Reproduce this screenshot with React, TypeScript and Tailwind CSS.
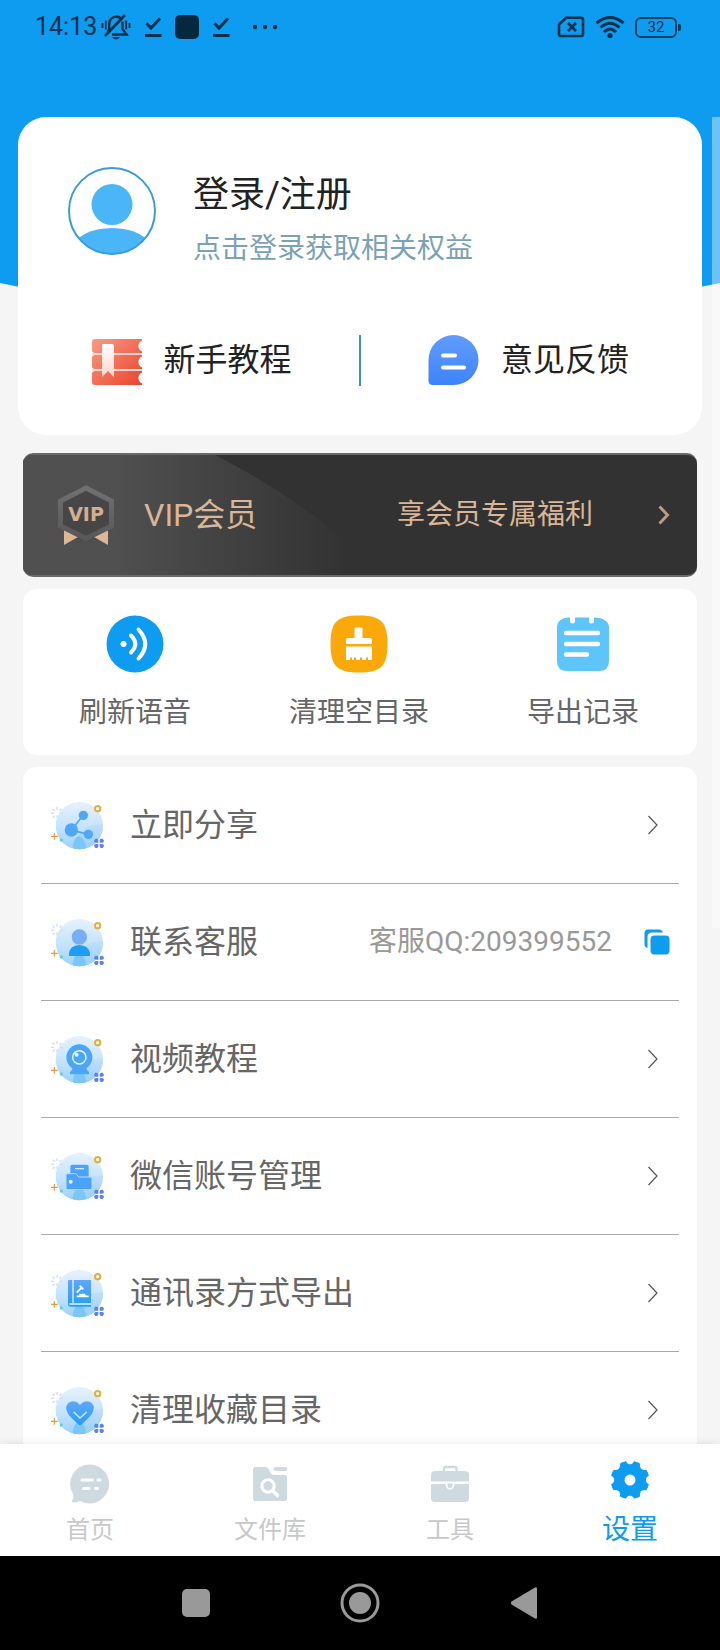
import { useState } from 'react';
import type { ReactNode } from 'react';

type Tab = 'home' | 'files' | 'tools' | 'settings';

interface MenuItem {
  id: string;
  label: string;
  glyph: ReactNode;
  extra?: string;
}

/* ---------- status bar ---------- */

function MutedBellIcon() {
  return (
    <svg viewBox="0 0 30 28" className="h-7 w-[30px]" fill="none" stroke="#07304a" strokeWidth="2.400">
      <path d="M21 7C18.500 2 8.500 2.500 8.200 11v5L6.500 19" />
      <path d="M21.500 8.500V16l4 5.500H11" />
      <path d="M4 23L24 2" strokeWidth="2.600" />
      <path d="M11 24h8q-4 5-8 0z" fill="#07304a" stroke="none" />
      <path d="M1.500 10v5M4.800 7.500v9M25.200 7.500v9M28.500 10v5" strokeWidth="1.800" />
    </svg>
  );
}

function DownloadDoneIcon() {
  return (
    <svg viewBox="0 0 18 22" className="h-[22px] w-[18px]" fill="none" stroke="#07304a">
      <path d="M2.500 7.500L7 12L16 2.500" strokeWidth="3" />
      <path d="M1 19.500h16.500" strokeWidth="3" />
    </svg>
  );
}

function StatusBar() {
  return (
    <div className="flex h-[54px] items-center justify-between pr-[39px] pl-[35px] text-[#07304a]">
      <div className="flex items-center">
        <span className="w-[66px] text-[25px] leading-8">14:13</span>
        <MutedBellIcon />
        <div className="ml-[13px] flex items-center gap-[13px]">
          <DownloadDoneIcon />
          <span className="size-6 rounded-[5px] bg-[#04283d]" />
          <DownloadDoneIcon />
        </div>
        <svg viewBox="0 0 26 6" className="ml-[22px] h-1.5 w-[26px]" fill="#07304a">
          <circle cx="3" cy="3" r="2.200" />
          <circle cx="13" cy="3" r="2.200" />
          <circle cx="23" cy="3" r="2.200" />
        </svg>
      </div>
      <div className="flex items-center gap-2.5">
        <svg viewBox="0 0 28 22" className="h-[22px] w-7" fill="none" stroke="#07304a" strokeWidth="2.600">
          <path d="M9 1.800H24q2 0 2 2V18q0 2-2 2H4q-2 0-2-2V8.500z" strokeLinejoin="round" />
          <path d="M11 7l8 8M19 7l-8 8" />
        </svg>
        <svg viewBox="0 0 30 24" className="h-6 w-[30px]" fill="none" stroke="#07304a" strokeWidth="3">
          <path d="M1.500 8Q15-3 28.500 8" />
          <path d="M5.500 12.500Q15 4 24.500 12.500" />
          <path d="M9 17Q15 11 21 17" />
          <circle cx="15" cy="20.500" r="2.600" fill="#07304a" stroke="none" />
        </svg>
        <div className="flex items-center">
          <span className="flex h-[21px] w-[42px] items-center justify-center rounded-md border-2 border-[#0a4061] text-[15px] leading-4">
            32
          </span>
          <span className="ml-px h-[7px] w-[3px] rounded-r-[2px] bg-[#0a4061]" />
        </div>
      </div>
    </div>
  );
}

/* ---------- profile card ---------- */

function AvatarIcon() {
  return (
    <svg viewBox="0 0 88 88" className="size-[88px]">
      <defs>
        <clipPath id="avatar-clip">
          <circle cx="44" cy="44" r="43" />
        </clipPath>
      </defs>
      <circle cx="44" cy="44" r="43" fill="#fff" />
      <circle cx="44" cy="37.500" r="20.500" fill="#4bb6f7" />
      <ellipse cx="44" cy="81" rx="38" ry="20" fill="#4bb6f7" clipPath="url(#avatar-clip)" />
      <circle cx="44" cy="44" r="43" fill="none" stroke="#3a9bdc" strokeWidth="2" />
    </svg>
  );
}

function BookIcon() {
  return (
    <svg viewBox="0 -4 52 52" className="size-[52px]">
      <defs>
        <linearGradient id="book" x1="0" y1="0" x2="1" y2="1">
          <stop offset="0" stopColor="#fd9a83" />
          <stop offset="1" stopColor="#e9442c" />
        </linearGradient>
        <linearGradient id="mark" x1="0" y1="0" x2="0" y2="1">
          <stop offset="0" stopColor="#fff" />
          <stop offset="1" stopColor="#fbd5cc" />
        </linearGradient>
      </defs>
      <path
        fill="url(#book)"
        d="M4 1H51V2.500A6 6 0 0 0 51 13.500V15H4Q1 15 1 12V4Q1 1 4 1zM4 17H51V18.500A6 6 0 0 0 51 29.500V31H4Q1 31 1 28V20Q1 17 4 17zM4 33H51V34.500A6 6 0 0 0 51 45.500V47H4Q1 47 1 44V36Q1 33 4 33z"
      />
      <path d="M1 16H51M1 32H51" stroke="#fcd0c6" strokeWidth="1.500" />
      <path d="M12 6H21Q23 6 23 8V39L17 33L11 39V7Q11 6 12 6z" fill="url(#mark)" />
    </svg>
  );
}

function FeedbackIcon() {
  return (
    <svg viewBox="0 0 51 52" className="h-[52px] w-[51px]">
      <defs>
        <linearGradient id="feedback" x1="0" y1="0" x2="0" y2="1">
          <stop offset="0" stopColor="#639bfe" />
          <stop offset="1" stopColor="#3d84fb" />
        </linearGradient>
      </defs>
      <path d="M25.500 1A25 25 0 0 1 25.500 51H5Q.500 51 .500 47V26A25 25 0 0 1 25.500 1z" fill="url(#feedback)" />
      <path d="M15 21.500h12M15 33.500h21" stroke="#fff" strokeWidth="4" strokeLinecap="round" />
    </svg>
  );
}

function ProfileCard() {
  return (
    <section className="mx-[18px] rounded-[28px] bg-white pt-[50px] pb-[49px]">
      <button type="button" className="flex items-start gap-[37px] px-[50px] text-left">
        <AvatarIcon />
        <span className="block pt-1">
          <span className="block text-4xl leading-[48px] text-[#222]">登录/注册</span>
          <span className="mt-2.5 block text-[28px] leading-10 text-[#7ba1b6]">点击登录获取相关权益</span>
        </span>
      </button>
      <div className="mt-[65px] flex items-center text-[32px] leading-10 text-[#222]">
        <button type="button" className="flex flex-1 items-center justify-center gap-5 pl-1.5">
          <BookIcon />
          新手教程
        </button>
        <span className="h-[51px] w-0.5 bg-[#3a96bd]" />
        <button type="button" className="flex flex-1 items-center justify-center gap-[22px] pr-1.5">
          <FeedbackIcon />
          意见反馈
        </button>
      </div>
    </section>
  );
}

/* ---------- vip banner ---------- */

function VipBadge() {
  return (
    <svg viewBox="0 0 60 66" className="h-[66px] w-[60px]">
      <defs>
        <linearGradient id="hex" x1="0" y1="0" x2="0" y2="1">
          <stop offset="0" stopColor="#707070" />
          <stop offset="1" stopColor="#585858" />
        </linearGradient>
        <radialGradient id="glow">
          <stop offset=".5" stopColor="#3c3c3c" stopOpacity=".7" />
          <stop offset="1" stopColor="#505050" stopOpacity="0" />
        </radialGradient>
      </defs>
      <ellipse cx="30" cy="33" rx="30" ry="33" fill="url(#glow)" />
      <path d="M8 48L22 55L8 63zM52 48L38 55L52 63z" fill="#dcb697" />
      <path d="M30 6L55.500 19V44L30 56.500L4.500 44V19z" fill="#464646" stroke="url(#hex)" strokeWidth="5" />
      <text
        x="30"
        y="39"
        textAnchor="middle"
        fontFamily="DejaVu Sans, sans-serif"
        fontSize="19"
        fontWeight="700"
        fill="#d3ae90"
      >
        VIP
      </text>
    </svg>
  );
}

function VipBanner() {
  return (
    <button
      type="button"
      className="relative mx-[23px] mt-[18px] flex h-[124px] items-center overflow-hidden rounded-[10px] border-y-2 border-[#6a6a6a] bg-[#323232] pr-[27px] pl-[33px] text-[#d9b698]"
    >
      <svg viewBox="0 0 360 120" className="absolute top-0 left-0 h-full w-[360px]" preserveAspectRatio="none">
        <defs>
          <linearGradient id="sheen" x1="0" x2="1">
            <stop offset=".25" stopColor="#505050" />
            <stop offset=".9" stopColor="#323232" />
          </linearGradient>
        </defs>
        <path d="M0 0H192Q290 50 360 120H0z" fill="url(#sheen)" />
      </svg>
      <span className="relative flex w-full items-center">
        <VipBadge />
        <span className="ml-7 text-[32px] leading-10">VIP会员</span>
        <span className="ml-auto text-[28px] leading-10">享会员专属福利</span>
        <svg viewBox="0 0 12 20" className="ml-[65px] h-5 w-3" fill="none" stroke="#b99c84" strokeWidth="3">
          <path d="M1.500 1.500L9.500 10L1.500 18.500" />
        </svg>
      </span>
    </button>
  );
}

/* ---------- quick actions ---------- */

function VoiceIcon() {
  return (
    <svg viewBox="0 0 58 58" className="size-[58px]" fill="none" stroke="#fff" strokeWidth="4" strokeLinecap="round">
      <circle cx="29" cy="29" r="28.500" fill="#0d9cf0" stroke="none" />
      <circle cx="17.500" cy="29" r="3" fill="#fff" stroke="none" />
      <path d="M25 20.500Q33.500 29 25 37.500" />
      <path d="M32.500 14.500Q46 29 32.500 43.500" />
    </svg>
  );
}

function BroomIcon() {
  return (
    <svg viewBox="0 0 58 58" className="size-[58px]">
      <path d="M29 .500C51 .500 57.500 7 57.500 29S51 57.500 29 57.500S.500 51 .500 29S7 .500 29 .500z" fill="#fba80b" />
      <path
        d="M24.500 13.500q0-1 1-1h6q1 0 1 1V23H40q2 0 2 2v4H16v-4q0-2 2-2h6.500zM16 31.500h26V45h-4v-2.500h-2V45H32v-2.500h-2V45H26v-2.500h-2V45H22v-2.500h-2V45H16z"
        fill="#fff"
      />
    </svg>
  );
}

function NotesIcon() {
  return (
    <svg viewBox="0 0 58 58" className="size-[58px]">
      <path
        d="M15 2.500H16V6q0 2.500 2.500 2.500T21 6V2.500H35V6q0 2.500 2.500 2.500T40 6V2.500Q55 3 55 13V46Q55 56 45 56H13Q3 56 3 46V13Q3 3 15 2.500z"
        fill="#5dc5fa"
      />
      <path d="M12 18h32M12 29h32M12 39.500h21" stroke="#fff" strokeWidth="4.400" strokeLinecap="round" />
    </svg>
  );
}

const quickActions = [
  { label: '刷新语音', icon: <VoiceIcon /> },
  { label: '清理空目录', icon: <BroomIcon /> },
  { label: '导出记录', icon: <NotesIcon /> },
];

function QuickActions() {
  return (
    <section className="mx-[23px] mt-3 grid grid-cols-3 rounded-[14px] bg-white pt-[26px] pr-0.5 pb-[22px]">
      {quickActions.map(action => (
        <button
          key={action.label}
          type="button"
          className="flex flex-col items-center gap-5 text-[28px] leading-10 text-[#666]"
        >
          {action.icon}
          {action.label}
        </button>
      ))}
    </section>
  );
}

/* ---------- menu ---------- */

// Every menu icon shares the same decorated globe, only the glyph differs.
function MenuIcon({ children }: { children: ReactNode }) {
  return (
    <svg viewBox="0 0 165 147" className="h-[49px] w-[55px] shrink-0">
      <defs>
        <linearGradient id="globe" x1="0" y1="0" x2="0" y2="1">
          <stop offset="0" stopColor="#e7f1fd" />
          <stop offset="1" stopColor="#a5d8fb" />
        </linearGradient>
        <linearGradient id="hill" x1="0" y1="0" x2="0" y2="1">
          <stop offset="0" stopColor="#c0dcfb" />
          <stop offset="1" stopColor="#8fcdfa" />
        </linearGradient>
        <linearGradient id="glyph" x1="0" y1="0" x2="0" y2="1">
          <stop offset="0" stopColor="#62a6f9" />
          <stop offset="1" stopColor="#22a0f4" />
        </linearGradient>
        <clipPath id="globe-clip">
          <circle cx="88" cy="74" r="71" />
        </clipPath>
      </defs>
      <circle cx="88" cy="74" r="71" fill="url(#globe)" />
      <g clipPath="url(#globe-clip)">
        <path d="M88 100Q110 66 165 70V147H88z" fill="url(#hill)" opacity=".8" />
        <path d="M10 102Q50 84 80 112V147H10z" fill="url(#hill)" opacity=".6" />
        <path d="M67 147Q70 112 86 104Q106 112 110 147z" fill="#7ac7f7" />
      </g>
      <g stroke="#cfdcf8" strokeWidth="4">
        <path d="M21 18v9M21 43v9M3 37h9M30 37h9M8 23l6 6M34 23l-6 6M8 50l6-6" />
      </g>
      <circle cx="143" cy="23" r="8" fill="#fff" stroke="#e2ae42" strokeWidth="6" />
      <path d="M3 106h20M13 96v20" stroke="#e79a42" strokeWidth="3.500" />
      <circle cx="34" cy="117" r="5" fill="#5ed6c2" />
      <g fill="#5b82ee">
        <path d="M136 113h4q5 0 5 5v7h-7q-6 0-6-6zM158 113h-4q-5 0-5 5v7h7q6 0 6-6z" />
        <path d="M136 141h4q5 0 5-5v-7h-7q-6 0-6 6zM158 141h-4q-5 0-5-5v-7h7q6 0 6 6z" />
      </g>
      {children}
    </svg>
  );
}

const menuItems: MenuItem[] = [
  {
    id: 'share',
    label: '立即分享',
    glyph: (
      <g fill="#4fa7f6">
        <path d="M64 87L100 43M64 87L115 100" stroke="#4fa7f6" strokeWidth="5" />
        <circle cx="100" cy="43" r="14" />
        <circle cx="64" cy="87" r="20" />
        <circle cx="115" cy="100" r="14" />
      </g>
    ),
  },
  {
    id: 'support',
    label: '联系客服',
    extra: '客服QQ:209399552',
    glyph: (
      <>
        <circle cx="88" cy="57" r="23" fill="#77aefa" />
        <path d="M57 114V106Q60 82 88 81Q116 82 120 106V114z" fill="#1f9df2" />
      </>
    ),
  },
  {
    id: 'video',
    label: '视频教程',
    glyph: (
      <>
        <path d="M70 92H107Q109 106 117 110V118H60V110Q68 106 70 92z" fill="#4ba6f5" />
        <circle cx="88" cy="67" r="39" fill="#4ba6f5" />
        <circle cx="88" cy="67" r="20" fill="none" stroke="#e7f3fe" strokeWidth="4.500" />
        <circle cx="80" cy="59" r="6" fill="#e7f3fe" />
      </>
    ),
  },
  {
    id: 'wechat',
    label: '微信账号管理',
    glyph: (
      <>
        <path d="M67 38H110Q116 38 116 44V76H61V44Q61 38 67 38z" fill="#4ba2fa" />
        <path d="M75 50h27" stroke="#cfe7fd" strokeWidth="4" />
        <path
          d="M53 65H78L86 75H121Q126 75 126 80V108Q126 113 121 113H53Q48 113 48 108V70Q48 65 53 65z"
          fill="#4ba2fa"
          stroke="#b9dcfc"
          strokeWidth="3"
        />
        <circle cx="62" cy="89" r="6" fill="#e7f3fe" />
      </>
    ),
  },
  {
    id: 'contacts',
    label: '通讯录方式导出',
    glyph: (
      <>
        <path d="M58 33H123V113H62Q54 113 54 105V37Q54 33 58 33z" fill="url(#glyph)" />
        <path d="M69 33V101M58 105H123" stroke="#e7f3fe" strokeWidth="4" />
        <path d="M89 50L100 61M96 55L80 71M80 82H116M88 77H106" stroke="#fff" strokeWidth="5.500" />
      </>
    ),
  },
  {
    id: 'favorites',
    label: '清理收藏目录',
    glyph: (
      <>
        <path
          d="M90 118Q84 116 56 86Q42 66 54 52Q72 38 90 56Q108 38 126 52Q138 66 124 86Q96 116 90 118z"
          fill="url(#glyph)"
        />
        <path d="M71 78L90 96L110 78" fill="none" stroke="#cfe7fd" strokeWidth="4.500" />
      </>
    ),
  },
];

function CopyIcon() {
  return (
    <svg viewBox="0 0 26 26" className="size-[26px]" fill="#0d9cf0">
      <path d="M4 .500H15Q18 .500 19 3.500H8Q3.500 3.500 3.500 8V19Q.500 18 .500 15V4Q.500 .500 4 .500z" />
      <rect x="6.500" y="6.500" width="19" height="19" rx="4" />
    </svg>
  );
}

function MenuList() {
  return (
    <ul className="mx-[23px] mt-3 rounded-[14px] bg-white px-[18px]">
      {menuItems.map(item => (
        <li key={item.id} className="border-b border-[#aaa]">
          <button type="button" className="flex h-[116px] w-full items-center pr-[9px] pl-[9px] text-left">
            <MenuIcon>{item.glyph}</MenuIcon>
            <span className="ml-[25px] text-[32px] leading-10 text-[#666]">{item.label}</span>
            {item.extra ? (
              <>
                <span className="mr-8 ml-auto text-[28px] leading-10 text-[#999]">{item.extra}</span>
                <CopyIcon />
              </>
            ) : (
              <svg viewBox="0 0 10 20" className="mr-3 ml-auto h-5 w-2.5" fill="none" stroke="#555" strokeWidth="1.200">
                <path d="M.500 1L9 10L.500 19" />
              </svg>
            )}
          </button>
        </li>
      ))}
    </ul>
  );
}

/* ---------- bottom tabs ---------- */

const tabs: { id: Tab; label: string; icon: ReactNode }[] = [
  {
    id: 'home',
    label: '首页',
    icon: (
      <>
        <path
          d="M20 .500A19.500 19.500 0 1 1 10 37Q7 38.500 3 38.500Q1.500 38 2.500 36Q4 33 3 30A19.500 19.500 0 0 1 20 .500z"
          fill="currentColor"
        />
        <path d="M12 16h10.500M28 16h2M13.500 24.500h5.500M25.500 24.500h2" stroke="#fff" strokeWidth="3" strokeLinecap="round" />
      </>
    ),
  },
  {
    id: 'files',
    label: '文件库',
    icon: (
      <>
        <path d="M6 3H15Q18 3 19 6L20.500 9Q21.500 11 24 11H34Q37 11 37 14V34Q37 37 34 37H6Q3 37 3 34V6Q3 3 6 3z" fill="currentColor" />
        <path d="M25.500 5h10" stroke="currentColor" strokeWidth="4" strokeLinecap="round" />
        <circle cx="18" cy="22" r="6.200" fill="none" stroke="#fff" strokeWidth="3" />
        <path d="M23 27l4.500 4.500" stroke="#fff" strokeWidth="3.500" strokeLinecap="round" />
      </>
    ),
  },
  {
    id: 'tools',
    label: '工具',
    icon: (
      <>
        <path d="M14 7V4.500Q14 3 15.500 3H25Q26.500 3 26.500 4.500V7" fill="none" stroke="currentColor" strokeWidth="2.400" />
        <path d="M5 7H35Q39 7 39 11V17.500H1V11Q1 7 5 7z" fill="currentColor" />
        <path d="M1 20H15.500A4.500 5.500 0 0 0 24.500 20H39V34Q39 38 35 38H5Q1 38 1 34z" fill="currentColor" />
        <path d="M17.500 19.500V21.500A2.500 2.500 0 0 0 22.500 21.500V19.500z" fill="currentColor" />
      </>
    ),
  },
  {
    id: 'settings',
    label: '设置',
    icon: (
      <>
        <circle cx="20" cy="20" r="19.300" fill="currentColor" />
        <g fill="#fff">
          <circle cx="20" cy="20" r="5.500" />
          <circle cx="20" cy="0" r="4.200" />
          <circle cx="34.500" cy="5.500" r="4.600" />
          <circle cx="40" cy="20" r="4.200" />
          <circle cx="34.500" cy="34.500" r="4.600" />
          <circle cx="20" cy="40" r="4.200" />
          <circle cx="5.500" cy="34.500" r="4.600" />
          <circle cx="0" cy="20" r="4.200" />
          <circle cx="5.500" cy="5.500" r="4.600" />
        </g>
      </>
    ),
  },
];

function TabBar({ active, onChange }: { active: Tab; onChange: (tab: Tab) => void }) {
  return (
    <nav className="relative grid h-28 grid-cols-4 bg-white shadow-[0_-1px_8px_rgba(0,0,0,0.08)]">
      {tabs.map(tab => (
        <button
          key={tab.id}
          type="button"
          onClick={() => onChange(tab.id)}
          className={
            tab.id === active
              ? 'flex flex-col items-center gap-2.5 pt-4 text-[28px] leading-10 text-[#0d9cf0]'
              : 'flex flex-col items-center gap-2 pt-5 text-2xl leading-9 text-[#c8c8c8]'
          }
        >
          <svg viewBox="0 0 40 40" className={tab.id === active ? 'size-10 text-[#0d9cf0]' : 'size-10 text-[#cfd9e0]'}>
            {tab.icon}
          </svg>
          {tab.label}
        </button>
      ))}
    </nav>
  );
}

function SystemNav() {
  return (
    <div className="flex h-[94px] items-center justify-center gap-[130px] bg-black">
      <button type="button" aria-label="最近任务" className="size-7 rounded-[5px] bg-[#999]" />
      <button type="button" aria-label="主屏幕">
        <svg viewBox="0 0 40 40" className="size-10">
          <circle cx="20" cy="20" r="18" fill="none" stroke="#999" strokeWidth="3" />
          <circle cx="20" cy="20" r="11" fill="#999" />
        </svg>
      </button>
      <button type="button" aria-label="返回">
        <svg viewBox="0 0 28 34" className="h-[34px] w-7">
          <path d="M25 1.500Q27 .500 27 2.500V31.500Q27 33.500 25 32.500L1.500 18.500Q0 17 1.500 15.500z" fill="#999" />
        </svg>
      </button>
    </div>
  );
}

export default function App() {
  const [tab, setTab] = useState<Tab>('settings');

  return (
    <div className="relative flex h-screen flex-col bg-[#f5f5f5] font-[Roboto,'Noto_Sans_CJK_SC',sans-serif]">
      {/* Curved backdrop behind the header and the profile card */}
      <svg viewBox="0 0 720 322" className="absolute inset-x-0 top-0 h-[322px] w-full" preserveAspectRatio="none">
        <path d="M0 0H720V283Q360 360 0 283z" fill="#0d9cf0" />
      </svg>

      <header className="relative h-[117px] shrink-0">
        <StatusBar />
      </header>

      <div className="relative min-h-0 flex-1">
        <main className="flex h-full flex-col overflow-y-auto [scrollbar-width:none] *:shrink-0">
          <ProfileCard />
          <VipBanner />
          <QuickActions />
          <MenuList />
        </main>
        {/* Scroll indicator */}
        <div className="absolute top-0 right-0 h-[811px] w-2 bg-white/40" />
      </div>

      <TabBar active={tab} onChange={setTab} />
      <SystemNav />
    </div>
  );
}
